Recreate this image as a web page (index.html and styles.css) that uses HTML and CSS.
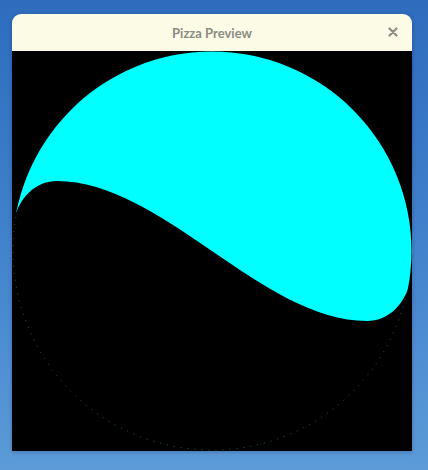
FILE: index.html
```html
<!DOCTYPE html>
<html>
<head>
<meta charset="utf-8">
<link rel="stylesheet" href="styles.css">
</head>
<body>
<div class="window">
  <div class="titlebar">
    <span class="title">Pizza Preview</span>
    <span class="close" aria-label="Close">
      <svg width="10" height="10" viewBox="0 0 10 10"><path d="M1.5 1.5 L8.5 8.5 M8.5 1.5 L1.5 8.5" stroke="#8c8c80" stroke-width="2.2" stroke-linecap="round"/></svg>
    </span>
  </div>
  <div class="canvas">
    <svg width="400" height="400" viewBox="0 0 400 400">
      <defs>
        <clipPath id="disc"><circle cx="200" cy="200" r="199.5"/></clipPath>
      </defs>
      <rect width="400" height="400" fill="#000"/>
      <circle cx="200" cy="200" r="199" fill="none" stroke="#2a8a80" stroke-width="0.7" stroke-dasharray="1 6"/>
      <path clip-path="url(#disc)" fill="#00ffff" d="M0 0 L0 178 C5 145 25 130 45 130 C150 130 250 270 355 270 C375 270 395 255 400 222 L400 0 Z"/>
    </svg>
  </div>
</div>
</body>
</html>
```
FILE: styles.css
```css
html, body {
  margin: 0;
  padding: 0;
}
body {
  width: 428px;
  height: 470px;
  background: linear-gradient(to bottom, #2f6cbd 0%, #3f7fcb 45%, #5c9bd8 100%);
  overflow: hidden;
}
.window {
  margin: 14px 0 0 12px;
  width: 400px;
  border-radius: 9px 9px 0 0;
  overflow: hidden;
  box-shadow: 0 1px 4px rgba(0, 0, 40, 0.25);
}
.titlebar {
  height: 37px;
  background: #fbfbe6;
  display: flex;
  align-items: center;
  justify-content: center;
  position: relative;
}
.title {
  font-family: Lato, "Open Sans", sans-serif;
  font-weight: 700;
  font-size: 13px;
  color: #8c8c84;
  margin-top: 1px;
}
.close {
  position: absolute;
  right: 14px;
  top: 13px;
  width: 10px;
  height: 10px;
  display: flex;
}
.canvas {
  width: 400px;
  height: 400px;
  background: #000;
}
.canvas svg {
  display: block;
}
```
